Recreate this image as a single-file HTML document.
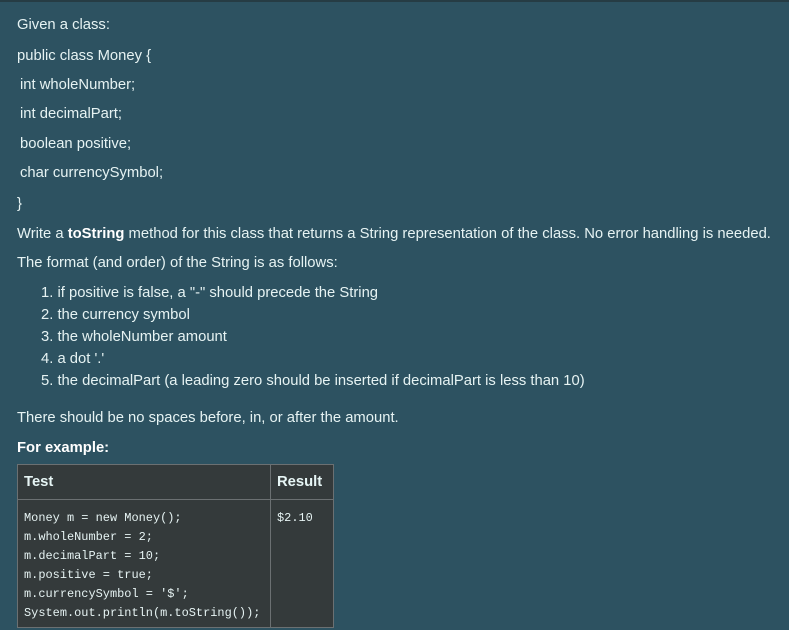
<!DOCTYPE html>
<html><head><style>
body{margin:0;width:789px;height:630px;overflow:hidden;background:#2d5261;font-family:"Liberation Sans",sans-serif;font-size:14.8px;color:#e6f3f3;position:relative}
.top{position:absolute;left:0;top:0;width:789px;height:2px;background:#263c44}
.w{position:absolute;left:0;top:2px;width:789px}
.l{position:absolute;left:17px;white-space:nowrap;line-height:20px}
.in{left:20px}
b{color:#fff}
table{position:absolute;left:17px;top:464px;border-collapse:collapse;background:#343a3b}
td,th{border:1px solid #6b7072;text-align:left;vertical-align:top}
th{height:34px;padding:0 6px;font-weight:bold;color:#e6f5f5;vertical-align:middle}
td{font-family:"Liberation Mono",monospace;font-size:11.95px;line-height:19.1px;padding:9px 6px 0 6px;height:118px}
</style></head><body>
<div class="top"></div>
<div class="w">
<div class="l" style="top:13px">Given a class:</div>
<div class="l" style="top:44px">public class Money {</div>
<div class="l in" style="top:73px">int wholeNumber;</div>
<div class="l in" style="top:102px">int decimalPart;</div>
<div class="l in" style="top:132px">boolean positive;</div>
<div class="l in" style="top:161px">char currencySymbol;</div>
<div class="l" style="top:192px">}</div>
<div class="l" style="top:222px">Write a <b>toString</b> method for this class that returns a String representation of the class. No error handling is needed.</div>
<div class="l" style="top:251px">The format (and order) of the String is as follows:</div>
<div class="l" style="top:281px;left:41px">1. if positive is false, a "-" should precede the String</div>
<div class="l" style="top:303px;left:41px">2. the currency symbol</div>
<div class="l" style="top:325px;left:41px">3. the wholeNumber amount</div>
<div class="l" style="top:347px;left:41px">4. a dot '.'</div>
<div class="l" style="top:369px;left:41px">5. the decimalPart (a leading zero should be inserted if decimalPart is less than 10)</div>
<div class="l" style="top:406px">There should be no spaces before, in, or after the amount.</div>
<div class="l" style="top:436px"><b>For example:</b></div>
</div>
<table>
<tr><th style="width:240px">Test</th><th style="width:50px">Result</th></tr>
<tr><td>Money m = new Money();<br>m.wholeNumber = 2;<br>m.decimalPart = 10;<br>m.positive = true;<br>m.currencySymbol = '$';<br>System.out.println(m.toString());</td><td>$2.10</td></tr>
</table>
</body></html>
